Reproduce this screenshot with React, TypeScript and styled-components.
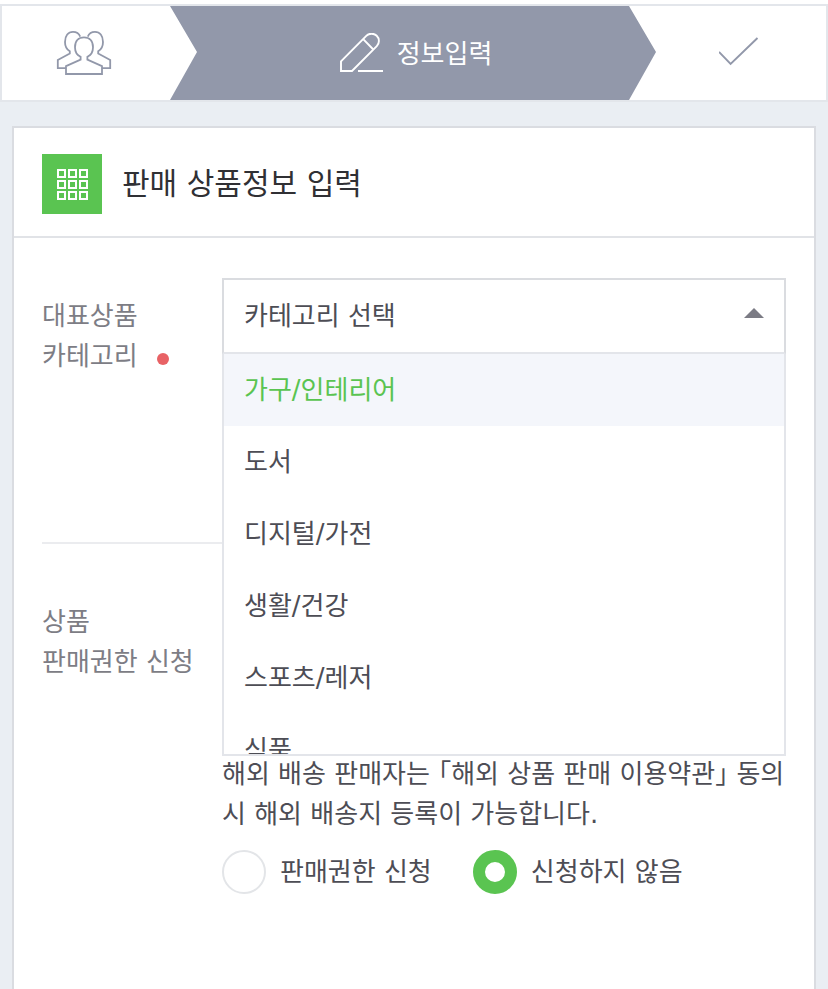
import { useState } from "react";
import styled, { createGlobalStyle } from "styled-components";

const GlobalStyle = createGlobalStyle`
  *, *::before, *::after { box-sizing: border-box; }
  body {
    margin: 0;
    background: #fff;
    color: #4d4d55;
    font-family: "DejaVu Sans", "Noto Sans CJK KR", sans-serif;
    font-size: 26px;
    line-height: 40px;
    word-break: keep-all;
  }
  button, input { font: inherit; color: inherit; }
`;

const Page = styled.div`
  display: flex;
  flex-direction: column;
  min-height: 100vh;
  padding-top: 4px;
`;

const Stepper = styled.ol`
  display: grid;
  grid-template-columns: 168fr 486fr 170fr;
  height: 98px;
  margin: 0;
  padding: 0;
  list-style: none;
  border: 2px solid #e3e6eb;
`;

const Step = styled.li<{ $active?: boolean }>`
  display: flex;
  align-items: center;
  justify-content: center;
  gap: 14px;
  padding: ${(p) => (p.$active ? "2px 0 0 6px" : "0 4px 0 0")};
  color: ${(p) => (p.$active ? "#fff" : "#9298aa")};
  background: ${(p) => (p.$active ? "#9298aa" : "#fff")};
  clip-path: ${(p) =>
    p.$active
      ? "polygon(0 0, calc(100% - 27px) 0, 100% 49%, calc(100% - 27px) 100%, 0 100%, 27px 49%)"
      : "none"};

  svg { flex: none; }
`;

const Main = styled.main`
  display: flex;
  flex: 1;
  flex-direction: column;
  padding: 24px 12px 0;
  background: #eaeef3;
`;

const Card = styled.section`
  flex: 1;
  background: #fff;
  border: 2px solid #dadce1;
  border-bottom: 0;
`;

const CardHeader = styled.header`
  display: flex;
  align-items: center;
  gap: 20px;
  padding: 26px 28px 22px;
  border-bottom: 2px solid #e1e3e7;
`;

const TitleIcon = styled.span`
  display: flex;
  align-items: center;
  justify-content: center;
  width: 60px;
  height: 60px;
  color: #fff;
  background: #5ac451;
`;

const Title = styled.h1`
  margin: 0;
  color: #303034;
  font-size: 30px;
  font-weight: 400;
`;

const FormRow = styled.div<{ $divided?: boolean }>`
  display: grid;
  grid-template-columns: 180px 1fr;
  min-height: 306px;
  margin: 0 28px;
  padding: 40px 0;
  border-bottom: ${(p) => (p.$divided ? "2px solid #ebecef" : "0")};
`;

const RowLabel = styled.div`
  padding-top: 18px;
  color: #7d7d85;
`;

const RequiredDot = styled.span`
  display: inline-block;
  width: 12px;
  height: 12px;
  margin-left: 19px;
  border-radius: 50%;
  background: #e86265;
`;

const Dropdown = styled.div`
  position: relative;
  align-self: start;
`;

const DropdownButton = styled.button`
  display: flex;
  align-items: center;
  justify-content: space-between;
  width: 100%;
  height: 76px;
  padding: 0 20px;
  text-align: left;
  background: #fff;
  border: 2px solid #dadce0;
  border-bottom-color: #e3e5ea;
  border-radius: 0;
  cursor: pointer;

  svg { margin-bottom: 6px; }
`;

const OptionList = styled.ul`
  position: absolute;
  z-index: 1;
  top: 100%;
  left: 0;
  right: 0;
  max-height: 402px;
  margin: 0;
  padding: 0;
  overflow-y: auto;
  scrollbar-width: none;
  list-style: none;
  background: #fff;
  border: 2px solid #e3e5ea;
  border-top: 0;
`;

const Option = styled.li<{ $selected: boolean }>`
  padding: 16px 20px;
  color: ${(p) => (p.$selected ? "#5ac451" : "inherit")};
  background: ${(p) => (p.$selected ? "#f4f6fb" : "#fff")};
  cursor: pointer;
`;

const PermissionField = styled.div`
  padding-top: 170px;
`;

const Notice = styled.p`
  margin: 0 0 16px;
  font-feature-settings: "halt";
`;

const RadioGroup = styled.div`
  display: flex;
  flex-wrap: wrap;
  gap: 16px 41px;
`;

const RadioLabel = styled.label`
  display: flex;
  align-items: center;
  gap: 14px;
  cursor: pointer;
`;

const Radio = styled.input`
  appearance: none;
  width: 44px;
  height: 44px;
  margin: 0;
  background: #fff;
  border: 2px solid #e3e5e8;
  border-radius: 50%;

  &:checked { border: 12px solid #5ac451; }
`;

const PeopleIcon = () => (
  <svg width="56" height="46" viewBox="0 0 56 46" fill="none" stroke="currentColor" strokeWidth="1.8" role="img" aria-label="회원">
    <path d="M10 38.2H1.8V30L13.8 23.5V21.3C10.6 19.4 9 16 9 12C9 5.6 12.2 1.9 17 1.9C20.5 1.9 23 3.6 24.2 6.6" />
    <path d="M46 38.2H54.2V30L42.2 23.5V21.3C45.4 19.4 47 16 47 12C47 5.6 43.8 1.9 39 1.9C35.5 1.9 33 3.6 31.8 6.6" />
    <path d="M10 44V36.2L24.6 29.6V26.8C20.8 25 19 21.4 19 17.2C19 11 22.6 7.4 28 7.4C33.4 7.4 37 11 37 17.2C37 21.4 35.2 25 31.4 26.8V29.6L46 36.2V44Z" />
  </svg>
);

const PencilIcon = () => (
  <svg width="43" height="42" viewBox="0 0 43 42" fill="none" stroke="currentColor" strokeWidth="1.9" aria-hidden="true">
    <path d="M1 38V28.4L26.3 2.9A7.3 7.3 0 0 1 36.8 13.2L12 38Z" />
    <path d="M23.2 6.2L33.3 16.5M18 38H43" />
  </svg>
);

const CheckIcon = () => (
  <svg width="40" height="34" viewBox="0 0 40 34" fill="none" stroke="currentColor" strokeWidth="1.9" role="img" aria-label="완료">
    <path d="M0 16L11.6 28L38.5 2" />
  </svg>
);

const GridIcon = () => (
  <svg width="31" height="31" viewBox="0 0 31 31" fill="none" stroke="currentColor" strokeWidth="2" aria-hidden="true">
    {[1, 12, 23].flatMap((y) =>
      [1, 12, 23].map((x) => <rect key={`${x}-${y}`} x={x} y={y} width="7" height="7" />)
    )}
  </svg>
);

const CaretIcon = () => (
  <svg width="20" height="10" viewBox="0 0 20 10" fill="#7b7b84" aria-hidden="true">
    <path d="M10 0L20 10H0Z" />
  </svg>
);

const categories = ["가구/인테리어", "도서", "디지털/가전", "생활/건강", "스포츠/레저", "식품"];

export default function App() {
  const [open, setOpen] = useState(true);
  const [highlighted, setHighlighted] = useState(categories[0]);
  const [chosen, setChosen] = useState("카테고리 선택");

  const choose = (name: string) => {
    setHighlighted(name);
    setChosen(name);
    setOpen(false);
  };

  return (
    <>
      <GlobalStyle />
      <Page>
        <Stepper>
          <Step><PeopleIcon /></Step>
          <Step $active aria-current="step"><PencilIcon />정보입력</Step>
          <Step><CheckIcon /></Step>
        </Stepper>
        <Main>
          <Card>
            <CardHeader>
              <TitleIcon><GridIcon /></TitleIcon>
              <Title>판매 상품정보 입력</Title>
            </CardHeader>
            <FormRow $divided>
              <RowLabel id="category-label">
                대표상품<br />카테고리<RequiredDot />
              </RowLabel>
              <Dropdown>
                <DropdownButton
                  type="button"
                  id="category-value"
                  aria-haspopup="listbox"
                  aria-expanded={open}
                  aria-labelledby="category-label category-value"
                  onClick={() => setOpen(!open)}
                >
                  {chosen}
                  <CaretIcon />
                </DropdownButton>
                {open && (
                  <OptionList role="listbox" aria-labelledby="category-label">
                    {categories.map((name) => (
                      <Option
                        key={name}
                        role="option"
                        aria-selected={name === highlighted}
                        $selected={name === highlighted}
                        onMouseEnter={() => setHighlighted(name)}
                        onClick={() => choose(name)}
                      >
                        {name}
                      </Option>
                    ))}
                  </OptionList>
                )}
              </Dropdown>
            </FormRow>
            <FormRow>
              <RowLabel id="permission-label">상품<br />판매권한 신청</RowLabel>
              <PermissionField>
                <Notice>
                  해외 배송 판매자는 「해외 상품 판매 이용약관」 동의 시 해외 배송지 등록이 가능합니다.
                </Notice>
                <RadioGroup role="radiogroup" aria-labelledby="permission-label">
                  <RadioLabel>
                    <Radio type="radio" name="permission" value="apply" />
                    판매권한 신청
                  </RadioLabel>
                  <RadioLabel>
                    <Radio type="radio" name="permission" value="none" defaultChecked />
                    신청하지 않음
                  </RadioLabel>
                </RadioGroup>
              </PermissionField>
            </FormRow>
          </Card>
        </Main>
      </Page>
    </>
  );
}
